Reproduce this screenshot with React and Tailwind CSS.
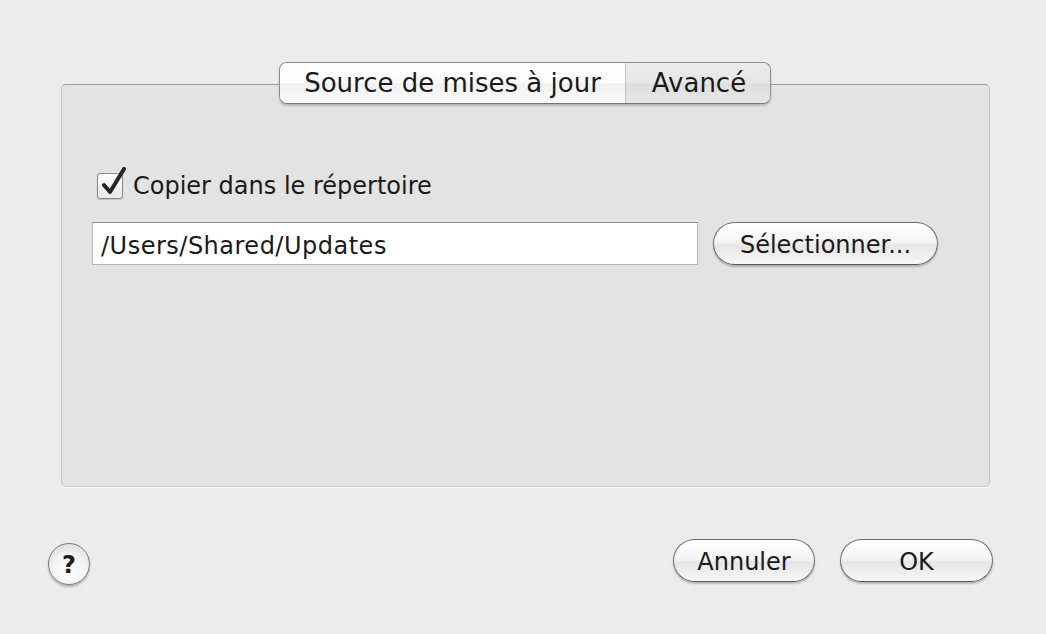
import React from "react";

const font = { fontFamily: '"DejaVu Sans", Verdana, sans-serif' };

function PillButton({ children, className = "" }) {
  return (
    <div
      className={`flex items-center justify-center rounded-full border border-[#6f6f6f] border-b-[#5a5a5a] bg-[linear-gradient(#ffffff,#f4f4f4_45%,#e6e6e6_55%,#f7f7f7)] shadow-[0_2px_2px_rgba(0,0,0,0.22)] text-[24px] leading-none text-[#1a1a1a] pt-[2px] ${className}`}
    >
      {children}
    </div>
  );
}

export default function App() {
  return (
    <div
      className="w-[1046px] h-[634px] bg-[#ececec] flex flex-col pt-[62px] overflow-hidden"
      style={font}
    >
      {/* Tabs */}
      <div className="relative z-10 flex justify-center pl-[4px]">
        <div className="flex h-[42px] rounded-[8px] border border-[#8c8c8c] border-b-[#767676] shadow-[0_2px_2px_rgba(0,0,0,0.18)] overflow-hidden text-[26px] leading-none text-[#1a1a1a]">
          <div className="w-[346px] flex items-center justify-center bg-[linear-gradient(#ffffff,#fbfbfb_50%,#f1f1f1_52%,#fafafa)] border-r border-[#c4c4c4]">
            Source de mises à jour
          </div>
          <div className="w-[144px] flex items-center justify-center bg-[linear-gradient(#ececec,#e6e6e6_50%,#dedede_52%,#e6e6e6)] pl-[2px]">
            Avancé
          </div>
        </div>
      </div>

      {/* Panel */}
      <div className="ml-[61px] w-[929px] h-[403px] -mt-[20px] rounded-[5px] border border-[#c2c2c2] border-t-[#9d9d9d] border-b-[#c8c8c8] bg-[#e3e3e3] shadow-[0_1px_1px_rgba(255,255,255,0.8)] pt-[87px] pl-[30px] flex flex-col">
        <div className="flex items-center h-[28px] ml-[5px]">
          <div className="relative w-[26px] h-[26px] rounded-[3px] border border-[#8a8a8a] bg-[linear-gradient(#fdfdfd,#e9e9e9)] shadow-[0_1px_1px_rgba(0,0,0,0.15)]">
            <svg
              className="absolute left-[2px] -top-[7px]"
              width="28"
              height="30"
              viewBox="0 0 28 30"
            >
              <path
                d="M4 18 L10 25 L24 2"
                fill="none"
                stroke="#262626"
                strokeWidth="4"
                strokeLinecap="round"
                strokeLinejoin="round"
              />
            </svg>
          </div>
          <span className="ml-[10px] text-[24px] leading-none text-[#1a1a1a]">
            Copier dans le répertoire
          </span>
        </div>

        <div className="flex items-center mt-[22px]">
          <div className="w-[606px] h-[43px] bg-white border border-[#b4b4b4] border-t-[#8a8a8a] flex items-center pl-[8px] pt-[5px] text-[24px] leading-none tracking-[0.5px] text-[#1a1a1a]">
            /Users/Shared/Updates
          </div>
          <PillButton className="ml-[15px] w-[225px] h-[43px]">
            Sélectionner...
          </PillButton>
        </div>
      </div>

      {/* Bottom row */}
      <div className="flex items-center mt-[52px] h-[43px] pl-[48px] pr-[53px]">
        <div className="w-[42px] h-[42px] mt-[6px] rounded-full border border-[#7a7a7a] bg-[radial-gradient(circle_at_50%_70%,#ffffff,#f3f3f3_50%,#d2d2d2)] shadow-[0_2px_2px_rgba(0,0,0,0.25)] flex items-center justify-center text-[24px] font-bold leading-none text-[#1a1a1a] pt-[2px]">
          ?
        </div>
        <div className="flex-1" />
        <PillButton className="w-[142px] h-[43px]">Annuler</PillButton>
        <PillButton className="ml-[25px] w-[153px] h-[43px]">OK</PillButton>
      </div>
    </div>
  );
}
